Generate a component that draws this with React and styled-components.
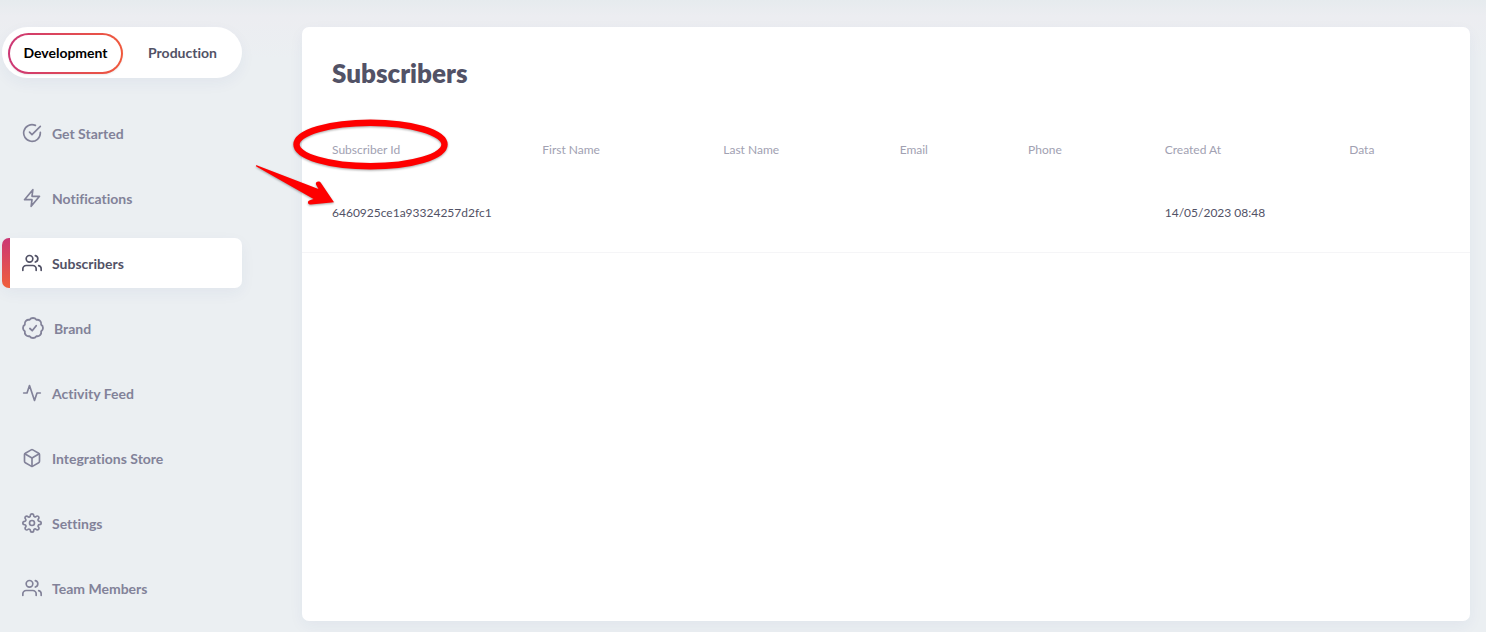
import React from "react";
import styled, { createGlobalStyle, css } from "styled-components";
import { FiCheckCircle, FiZap, FiUsers, FiActivity, FiBox, FiSettings } from "react-icons/fi";

const GlobalStyle = createGlobalStyle`
  *, *::before, *::after { box-sizing: border-box; }
  body {
    margin: 0;
    background: #ebeff2;
    color: #525266;
    font-family: Lato, "Liberation Sans", sans-serif;
    font-size: 14px;
    line-height: 20px;
    font-variant-ligatures: no-common-ligatures;
  }
`;

const Page = styled.div`
  display: flex;
  gap: 60px;
  min-height: 100vh;
  padding: 27px 16px 11px 2px;
  background: linear-gradient(#e6ebee, #ecedf1 16px, rgba(236, 237, 241, 0) 60px);
`;

const Sidebar = styled.aside`
  flex: 0 0 240px;
`;

const EnvironmentSwitch = styled.div`
  display: grid;
  grid-template-columns: 115px 1fr;
  margin-bottom: 30px;
  padding: 6px 0 4px 6px;
  border-radius: 26px;
  background: #fff;
  box-shadow: 0 5px 15px rgba(38, 68, 128, 0.05);
`;

const EnvironmentButton = styled.button`
  height: 41px;
  padding: 0 0 2px;
  border: 2px solid transparent;
  border-radius: 21px;
  background: none;
  color: #525266;
  font: inherit;
  font-weight: 700;
  font-variant-ligatures: inherit;
  cursor: pointer;
  ${({ $active }) =>
    $active &&
    css`
      color: #000;
      background:
        linear-gradient(#fff, #fff) padding-box,
        linear-gradient(90deg, #cc3775, #f0593c) border-box;
      box-shadow: 0 1px 2px rgba(0, 0, 0, 0.08);
    `}
`;

const Nav = styled.nav`
  display: flex;
  flex-direction: column;
  gap: 15px;
`;

const NavItem = styled.a`
  display: flex;
  align-items: center;
  gap: 10px;
  height: 50px;
  padding: 2px 0 0 20px;
  border-radius: 7px;
  color: #828299;
  font-weight: 700;
  text-decoration: none;

  svg {
    flex: none;
    margin-bottom: 2px;
  }

  ${({ $active }) =>
    $active &&
    css`
      color: #525266;
      background: linear-gradient(#cb3775, #f0603c) left / 8px 100% no-repeat, #fff;
      box-shadow: 0 5px 15px rgba(38, 68, 128, 0.05);
    `}
`;

const Panel = styled.main`
  position: relative;
  flex: 1;
  min-width: 0;
  border-radius: 7px;
  background: #fff;
  box-shadow: 0 5px 15px rgba(38, 68, 128, 0.05);
`;

const Title = styled.h1`
  margin: 0;
  padding: 30px 30px 38px;
  font-size: 26px;
  line-height: 32px;
  font-weight: 800;
`;

const Table = styled.table`
  width: 100%;
  border-collapse: collapse;
  table-layout: fixed;
  font-size: 12px;
  text-align: left;
`;

const Column = styled.col`
  width: ${({ $share }) => $share};
`;

const HeaderCell = styled.th`
  height: 46px;
  padding: 0 0 0 30px;
  color: #a1a1b2;
  font-weight: 400;
`;

const Cell = styled.td`
  height: 79px;
  padding: 2px 0 0 30px;
  border-bottom: 1px solid #f5f5f7;
  white-space: nowrap;
`;

const Annotation = styled.svg`
  position: absolute;
  top: 90px;
  left: -48px;
  pointer-events: none;
  filter: drop-shadow(0 1px 1px rgba(0, 0, 0, 0.35));
`;

function BrandIcon() {
  return (
    <svg width="22" height="22" viewBox="1 1 22 22" fill="none" stroke="currentColor" strokeWidth="1.8" strokeLinecap="round" strokeLinejoin="round" aria-hidden="true">
      <path d="M3.85 8.62a4 4 0 0 1 4.78-4.77 4 4 0 0 1 6.74 0 4 4 0 0 1 4.78 4.78 4 4 0 0 1 0 6.74 4 4 0 0 1-4.77 4.78 4 4 0 0 1-6.75 0 4 4 0 0 1-4.78-4.77 4 4 0 0 1 0-6.76Z" />
      <path d="M8.9 12.5L11.2 14.7L15.2 9.7" />
    </svg>
  );
}

const navItems = [
  { label: "Get Started", icon: <FiCheckCircle size={20} /> },
  { label: "Notifications", icon: <FiZap size={20} /> },
  { label: "Subscribers", icon: <FiUsers size={20} />, active: true },
  { label: "Brand", icon: <BrandIcon /> },
  { label: "Activity Feed", icon: <FiActivity size={20} /> },
  { label: "Integrations Store", icon: <FiBox size={20} /> },
  { label: "Settings", icon: <FiSettings size={20} /> },
  { label: "Team Members", icon: <FiUsers size={20} /> },
];

const columns = [
  { label: "Subscriber Id", key: "id", share: "18%" },
  { label: "First Name", key: "firstName", share: "15.5%" },
  { label: "Last Name", key: "lastName", share: "15.1%" },
  { label: "Email", key: "email", share: "11%" },
  { label: "Phone", key: "phone", share: "11.7%" },
  { label: "Created At", key: "createdAt", share: "15.8%" },
  { label: "Data", key: "data", share: "auto" },
];

const subscribers = [{ id: "6460925ce1a93324257d2fc1", createdAt: "14/05/2023 08:48" }];

export default function App() {
  return (
    <>
      <GlobalStyle />
      <Page>
        <Sidebar>
          <EnvironmentSwitch role="group" aria-label="Environment">
            <EnvironmentButton type="button" $active aria-pressed="true">Development</EnvironmentButton>
            <EnvironmentButton type="button" aria-pressed="false">Production</EnvironmentButton>
          </EnvironmentSwitch>
          <Nav>
            {navItems.map(({ label, icon, active }) => (
              <NavItem key={label} href="#" $active={active} aria-current={active ? "page" : undefined}>
                {icon}
                {label}
              </NavItem>
            ))}
          </Nav>
        </Sidebar>
        <Panel>
          <Title>Subscribers</Title>
          <Table>
            <colgroup>
              {columns.map((c) => (
                <Column key={c.key} $share={c.share} />
              ))}
            </colgroup>
            <thead>
              <tr>
                {columns.map((c) => (
                  <HeaderCell key={c.key} scope="col">{c.label}</HeaderCell>
                ))}
              </tr>
            </thead>
            <tbody>
              {subscribers.map((s) => (
                <tr key={s.id}>
                  {columns.map((c) => (
                    <Cell key={c.key}>{s[c.key]}</Cell>
                  ))}
                </tr>
              ))}
            </tbody>
          </Table>
          <Annotation width="196" height="92" viewBox="0 0 196 92" aria-hidden="true">
            <ellipse cx="116.5" cy="27.5" rx="74" ry="21.8" fill="none" stroke="#fe0000" strokeWidth="6.4" />
            <path
              d="M2.3 49.6C1.5 48.8 2.2 48 3.3 48.5L64.5 72L62 67.5C61 64.8 65.2 63.2 67 66L80 85.2L57 87.5C53.3 87.5 52.8 83.8 56.5 82.9L59.5 82.1Z"
              fill="#fe0000"
            />
          </Annotation>
        </Panel>
      </Page>
    </>
  );
}
